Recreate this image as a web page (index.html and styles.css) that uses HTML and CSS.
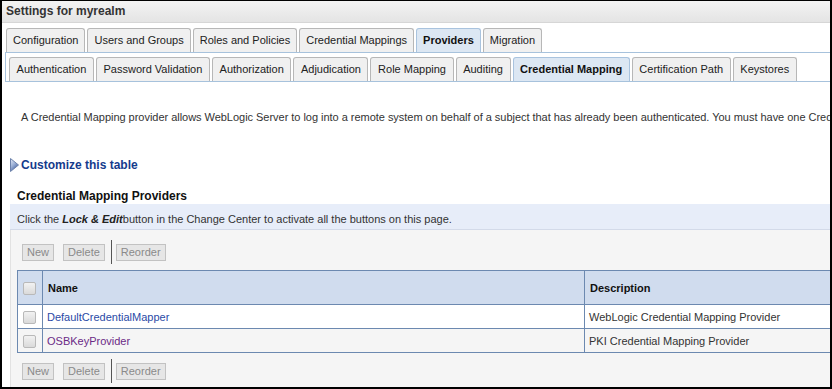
FILE: index.html
```html
<!DOCTYPE html>
<html lang="en">
<head>
    <meta charset="UTF-8">
    <meta name="viewport" content="width=device-width, initial-scale=1.0">
    <title>Settings for myrealm</title>
    <link rel="stylesheet" href="styles.css">
</head>
<body>
    <div class="frame">
        <div class="title">Settings for myrealm</div>

        <div class="tabs">
            <span class="tab">Configuration</span>
            <span class="tab">Users and Groups</span>
            <span class="tab">Roles and Policies</span>
            <span class="tab">Credential Mappings</span>
            <span class="tab active">Providers</span>
            <span class="tab">Migration</span>
        </div>

        <div class="subtabs">
            <span class="tab">Authentication</span>
            <span class="tab">Password Validation</span>
            <span class="tab">Authorization</span>
            <span class="tab">Adjudication</span>
            <span class="tab">Role Mapping</span>
            <span class="tab">Auditing</span>
            <span class="tab active">Credential Mapping</span>
            <span class="tab">Certification Path</span>
            <span class="tab">Keystores</span>
        </div>

        <p class="desc">A Credential Mapping provider allows WebLogic Server to log into a remote system on behalf of a subject that has already been authenticated. You must have one Credential Mapping provider in a security realm.</p>

        <a class="customize" href="#">
            <svg width="9" height="14" viewBox="0 0 9 14">
                <defs>
                    <linearGradient id="tri" x1="0" y1="0" x2="0.6" y2="1">
                        <stop offset="0" stop-color="#e6ecf7"/>
                        <stop offset="0.5" stop-color="#9fb3d8"/>
                        <stop offset="1" stop-color="#3f5c9c"/>
                    </linearGradient>
                </defs>
                <polygon points="0.5,0.5 8.5,7 0.5,13.5" fill="url(#tri)" stroke="#6d82ab"/>
            </svg>
            Customize this table
        </a>

        <div class="heading">Credential Mapping Providers</div>
        <div class="notice">Click the <em>Lock &amp; Edit</em> button in the Change Center to activate all the buttons on this page.</div>

        <div class="panel">
            <div class="toolbar">
                <button class="btn">New</button>
                <button class="btn">Delete</button>
                <span class="sep"></span>
                <button class="btn">Reorder</button>
            </div>

            <table class="grid">
                <colgroup>
                    <col class="c-check">
                    <col class="c-name">
                    <col class="c-desc">
                </colgroup>
                <tr>
                    <th class="check"><span class="box"></span></th>
                    <th>Name</th>
                    <th>Description</th>
                </tr>
                <tr class="odd">
                    <td class="check"><span class="box"></span></td>
                    <td><a class="link" href="#">DefaultCredentialMapper</a></td>
                    <td>WebLogic Credential Mapping Provider</td>
                </tr>
                <tr class="even">
                    <td class="check"><span class="box"></span></td>
                    <td><a class="link visited" href="#">OSBKeyProvider</a></td>
                    <td>PKI Credential Mapping Provider</td>
                </tr>
            </table>

            <div class="toolbar bottom">
                <button class="btn">New</button>
                <button class="btn">Delete</button>
                <span class="sep"></span>
                <button class="btn">Reorder</button>
            </div>
        </div>
    </div>
</body>
</html>
```

FILE: styles.css
```css
body {
    margin: 0;
    background-color: #fff;
}

.frame {
    box-sizing: border-box;
    width: 832px;
    height: 389px;
    border: 2px solid #000;
    border-top-width: 1px;
    overflow: hidden;
    display: flex;
    flex-direction: column;
    background-color: #fff;
    font-family: "Liberation Sans", Arial, sans-serif;
    font-size: 11px;
    color: #333;
}

.title {
    flex: none;
    height: 21px;
    line-height: 21px;
    padding-left: 4px;
    border-bottom: 1px solid #d6d6d6;
    background: linear-gradient(#f3f3f3, #e4e4e4);
    font-size: 12px;
    font-weight: bold;
    color: #333;
}

.tabs {
    flex: none;
    display: flex;
    margin-top: 5px;
    padding-left: 4px;
}

.tab {
    display: block;
    height: 23px;
    line-height: 23px;
    padding: 0 6px;
    margin-right: 2px;
    border: 1px solid #b7b7b7;
    border-bottom: none;
    border-radius: 3px 3px 0 0;
    background-color: #f0f0f0;
    color: #222;
    white-space: nowrap;
}

.tab.active {
    background-color: #dce7f3;
    border-color: #a9c3de;
    font-weight: bold;
    color: #111;
}

.subtabs {
    flex: none;
    display: flex;
    margin-left: 3px;
    padding: 4px 0 0 3px;
    border: 1px solid #a7c2dc;
    border-right: none;
}

.subtabs .tab {
    padding: 0 6.6px;
}

.desc {
    flex: none;
    margin: 28px 0 0 19px;
    line-height: 14px;
    white-space: nowrap;
    letter-spacing: -0.03px;
    color: #333;
}

.customize {
    flex: none;
    display: flex;
    align-items: center;
    gap: 2px;
    margin: 34px 0 0 8px;
    line-height: 14px;
    font-size: 12px;
    font-weight: bold;
    color: #153b8c;
    text-decoration: none;
}

.heading {
    flex: none;
    margin: 17px 0 1px 15px;
    line-height: 14px;
    font-size: 12px;
    font-weight: bold;
    color: #111;
}

.notice {
    flex: none;
    margin-left: 8px;
    padding: 8px 0 3px 7px;
    line-height: 14px;
    background-color: #e7edf9;
    border-bottom: 1px solid #d3dae9;
    white-space: nowrap;
    color: #333;
}

.notice em {
    font-weight: bold;
    margin-right: -3px;
    color: #222;
}

.panel {
    flex: 1;
    margin-left: 8px;
    padding: 10px 0 0 6px;
    border-left: 1px solid #e2e2e2;
    background-color: #f5f5f5;
}

.toolbar {
    display: flex;
    align-items: center;
    height: 24px;
    padding-left: 5px;
}

.toolbar.bottom {
    margin-top: 6px;
}

.btn {
    box-sizing: border-box;
    height: 17px;
    margin: 0 9px 0 0;
    padding: 0 4px;
    border: 1px solid #c2c2c2;
    border-radius: 0;
    background-color: #e6e6e6;
    font-family: "Liberation Sans", Arial, sans-serif;
    font-size: 11px;
    line-height: 15px;
    color: #8a8a8a;
}

.btn + .sep {
    margin-left: -3px;
}

.sep {
    width: 1px;
    height: 24px;
    margin-right: 4px;
    background-color: #555;
}

.grid {
    margin-top: 6px;
    width: 867px;
    table-layout: fixed;
    border-collapse: collapse;
}

.c-check {
    width: 25px;
}

.c-name {
    width: 542px;
}

.c-desc {
    width: 300px;
}

.grid th,
.grid td {
    border: 1px solid #6c89b0;
    text-align: left;
    line-height: 14px;
    white-space: nowrap;
}

.grid th {
    padding: 10px 5px 9px;
    background-color: #d0dcee;
    font-weight: bold;
    color: #111;
}

.grid td {
    padding: 5px 4px 4px;
    color: #333;
}

.grid .odd td {
    background-color: #fff;
}

.grid .even td {
    background-color: #f5f5f5;
}

.grid .check {
    padding-left: 5px;
    padding-right: 0;
}

.box {
    display: block;
    box-sizing: border-box;
    width: 13px;
    height: 13px;
    border: 1px solid #b9b9b9;
    border-radius: 2px;
    background: linear-gradient(#f2f2f2, #dadada);
}

.link {
    color: #2a4aa6;
    text-decoration: none;
}

.link.visited {
    color: #6b2a86;
}
```
